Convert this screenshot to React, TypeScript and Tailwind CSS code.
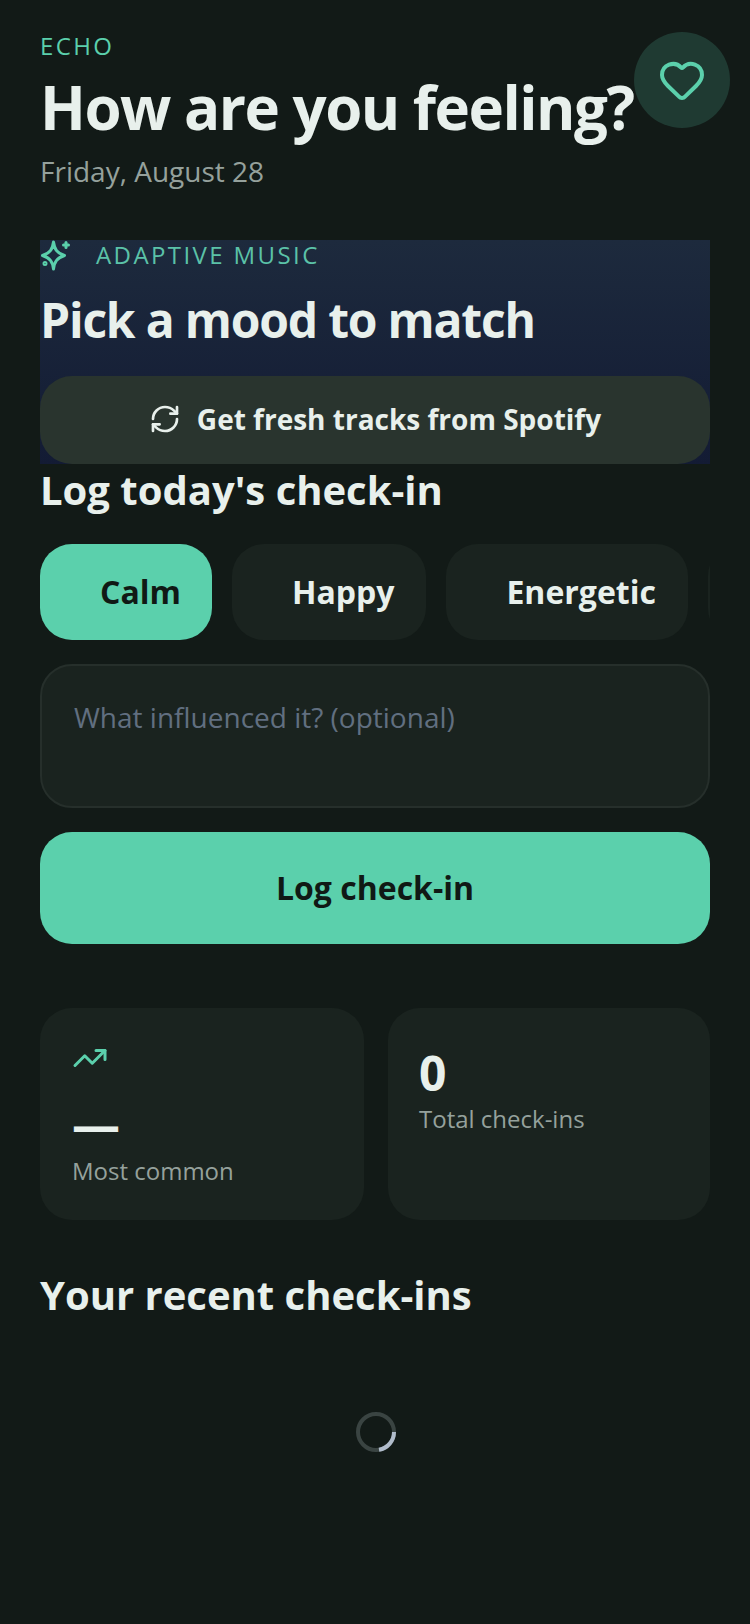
import React from 'react';
import { Heart, RefreshCw, TrendingUp } from 'lucide-react';

const moods = [
  { label: 'Calm', active: true },
  { label: 'Happy', active: false },
  { label: 'Energetic', active: false },
  { label: '', active: false },
];

function MoodChip({ label, active }: { label: string; active: boolean }) {
  return (
    <button
      className={
        active
          ? 'flex h-[96px] shrink-0 items-center rounded-[32px] bg-[#5BD0AC] pl-[60px] pr-[31px] text-[32px] font-bold text-[#101915]'
          : 'flex h-[96px] shrink-0 items-center rounded-[32px] bg-[#1A231F] pl-[60px] pr-[32px] text-[32px] font-bold text-[#E8F0EC]'
      }
    >
      {label}
    </button>
  );
}

function SparkIcon() {
  return (
    <svg width="32" height="32" viewBox="0 0 32 32" fill="none" stroke="#5BD0AC" strokeWidth="3" strokeLinecap="round" strokeLinejoin="round">
      <path d="M13.5 3C14.5 10.5 17 14 24.5 16.5C17 19 14.5 22.5 13.5 30C12.5 22.5 10 19 2.5 16.5C10 14 12.5 10.5 13.5 3Z" />
      <path d="M26 3.5V8.5" />
      <path d="M23.5 6H28.5" />
      <circle cx="5" cy="24.5" r="1" />
    </svg>
  );
}

export default function App() {
  return (
    <div className="h-[1624px] overflow-hidden bg-[#121A17] px-[40px] font-['Open_Sans',sans-serif] text-[#E8F0EC]">
      {/* Header */}
      <div className="flex items-start pt-[32px]">
        <div className="shrink-0">
          <p className="text-[24px] leading-[28px] tracking-[2.4px] text-[#5BD0AC]">ECHO</p>
          <h1 className="mt-[11px] whitespace-nowrap text-[60px] font-bold leading-[72px] tracking-[-1.5px]">How are you feeling?</h1>
          <p className="mt-[8px] text-[28px] leading-[40px] text-[#95A19C]">Friday, August 28</p>
        </div>
        <button className="flex h-[96px] w-[96px] shrink-0 items-center justify-center rounded-full bg-[#1F3A32]">
          <Heart className="h-[48px] w-[48px] text-[#5BD0AC]" strokeWidth={2} />
        </button>
      </div>

      {/* Adaptive music */}
      <div className="mt-[49px] bg-gradient-to-b from-[#1D2A3D] to-[#131B34]">
        <div className="flex h-[30px] items-center gap-[24px]">
          <SparkIcon />
          <span className="text-[24px] leading-[30px] tracking-[2.4px] text-[#5BC2A8]">ADAPTIVE MUSIC</span>
        </div>
        <h2 className="mt-[18px] text-[48px] font-bold leading-[64px] tracking-[-1.2px]">Pick a mood to match</h2>
        <button className="mt-[24px] flex h-[88px] w-full items-center justify-center gap-[16px] rounded-[32px] bg-[#29342E] pb-[2px] text-[28px] font-bold">
          <RefreshCw className="h-[32px] w-[32px]" strokeWidth={2} />
          Get fresh tracks from Spotify
        </button>
      </div>

      {/* Check-in form */}
      <h2 className="text-[40px] font-bold leading-[52px]">Log today's check-in</h2>
      <div className="mt-[28px] flex gap-[20px] overflow-hidden">
        {moods.map((mood, i) => (
          <MoodChip key={i} label={mood.label} active={mood.active} />
        ))}
      </div>
      <textarea
        className="mt-[24px] block h-[144px] w-full resize-none rounded-[32px] border-2 border-[#262F2B] bg-[#1A231F] px-[32px] py-[31px] text-[28px] leading-[40px] outline-none placeholder:text-[#616F80]"
        placeholder="What influenced it? (optional)"
      />
      <button className="mt-[24px] flex h-[112px] w-full items-center justify-center rounded-[32px] bg-[#5BD0AC] text-[32px] font-bold text-[#101915]">
        Log check-in
      </button>

      {/* Stats */}
      <div className="mt-[64px] flex gap-[24px]">
        <div className="h-[212px] w-[324px] rounded-[32px] bg-[#1A231F] px-[32px] pt-[32px]">
          <TrendingUp className="h-[36px] w-[36px] text-[#5BD0AC]" strokeWidth={2} />
          <p className="mt-[18px] text-[48px] font-bold leading-[60px]">—</p>
          <p className="mt-[1px] text-[24px] leading-[32px] text-[#95A19C]">Most common</p>
        </div>
        <div className="h-[212px] flex-1 rounded-[32px] bg-[#1A231F] pl-[31px] pr-[32px] pt-[35px]">
          <p className="text-[48px] font-bold leading-[60px]">0</p>
          <p className="text-[24px] leading-[32px] text-[#95A19C]">Total check-ins</p>
        </div>
      </div>

      {/* Recent */}
      <h2 className="mt-[49px] text-[40px] font-bold leading-[52px]">Your recent check-ins</h2>
      <div className="mt-[91px] flex justify-center pl-[2px]">
        <svg width="40" height="40" viewBox="0 0 40 40" fill="none">
          <circle cx="20" cy="20" r="18" stroke="#3A4442" strokeWidth="4" />
          <path d="M38 20A18 18 0 0 1 23 37.75" stroke="#B0BCCB" strokeWidth="4" />
        </svg>
      </div>
    </div>
  );
}
